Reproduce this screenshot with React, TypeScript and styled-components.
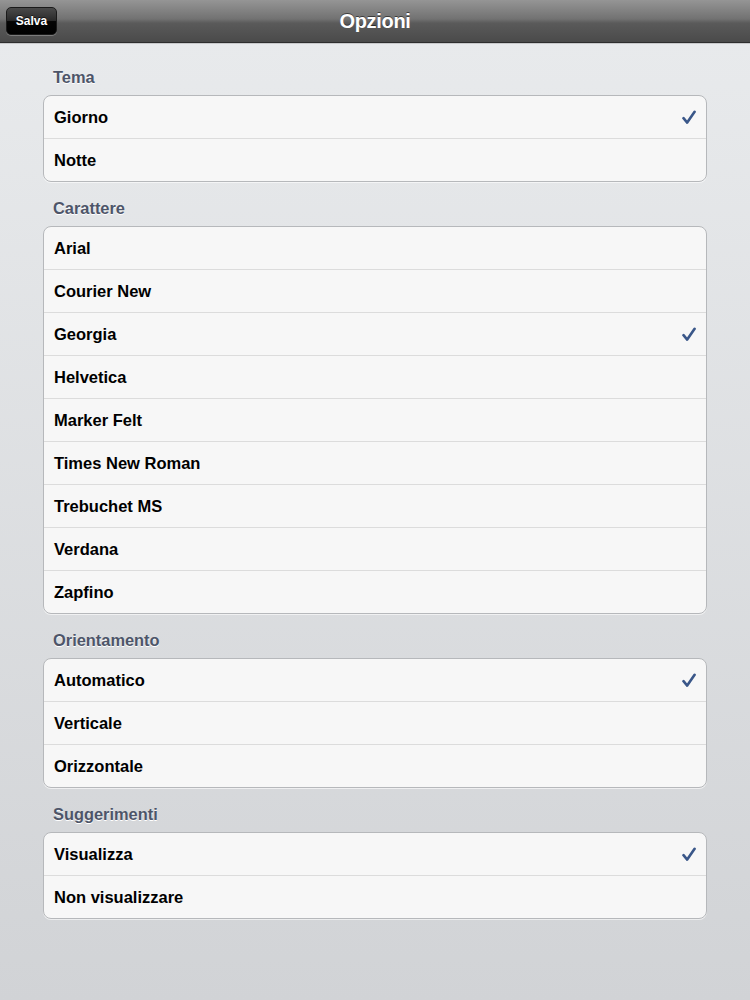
import React from "react";
import styled, { createGlobalStyle } from "styled-components";

const Global = createGlobalStyle`
  html, body { margin: 0; padding: 0; }
  body {
    font-family: "Liberation Sans", Helvetica, Arial, sans-serif;
    background: linear-gradient(180deg, #e8eaec 0%, #d2d4d7 100%);
    min-height: 1000px;
  }
`;

const Page = styled.div`
  width: 750px;
  min-height: 1000px;
  display: flex;
  flex-direction: column;
  background: linear-gradient(180deg, #e9ebed 0%, #d1d3d6 100%);
`;

const NavBar = styled.div`
  position: relative;
  height: 42px;
  display: flex;
  align-items: center;
  justify-content: center;
  background: linear-gradient(180deg, #959595 0%, #727272 45%, #5a5a5a 55%, #4a4a4a 100%);
  border-bottom: 1px solid #2e2e2e;
  box-shadow: 0 1px 0 #c8c9cb;
`;

const NavButton = styled.button`
  position: absolute;
  left: 6px;
  top: 7px;
  width: 51px;
  height: 28px;
  border-radius: 5px;
  border: 1px solid #1a1a1a;
  background: linear-gradient(180deg, #4a4a4a 0%, #2a2a2a 48%, #050505 52%, #000 100%);
  color: #fff;
  font-family: "Liberation Sans", Arial, sans-serif;
  font-weight: bold;
  font-size: 12px;
  padding: 0;
  box-shadow: 0 1px 0 rgba(255,255,255,0.25);
  text-shadow: 0 -1px 0 rgba(0,0,0,0.6);
`;

const Title = styled.div`
  color: #fff;
  font-weight: bold;
  font-size: 20px;
  letter-spacing: -0.3px;
  padding-top: 1px;
  text-shadow: 0 -1px 0 rgba(0,0,0,0.5);
`;

const Content = styled.div`
  padding: 25px 43px 0 43px;
  display: flex;
  flex-direction: column;
`;

const Section = styled.div`
  display: flex;
  flex-direction: column;
  margin-bottom: 17px;
`;

const Label = styled.div`
  font-weight: bold;
  font-size: 16.4px;
  color: #4d5569;
  padding-left: 10px;
  height: 18px;
  line-height: 18px;
  margin-bottom: 9px;
  text-shadow: 0 1px 0 #fff;
`;

const Group = styled.div`
  background: #f7f7f7;
  border: 1px solid #b6b8bb;
  border-radius: 8px;
  overflow: hidden;
  box-shadow: 0 1px 0 rgba(255,255,255,0.6);
`;

const Row = styled.div`
  height: 42px;
  display: flex;
  align-items: center;
  justify-content: space-between;
  padding: 0 10px;
  font-weight: bold;
  font-size: 16.5px;
  color: #000;
  & + & { border-top: 1px solid #dcdcdc; }
`;

const Check = () => (
  <svg width="14" height="15" viewBox="0 0 14 15">
    <path d="M1.5 8.2 L5.2 12.6 L12.6 1.8" fill="none" stroke="#3a5789" strokeWidth="2.6" strokeLinecap="round" strokeLinejoin="round" />
  </svg>
);

const sections = [
  { title: "Tema", items: ["Giorno", "Notte"], sel: 0 },
  { title: "Carattere", items: ["Arial", "Courier New", "Georgia", "Helvetica", "Marker Felt", "Times New Roman", "Trebuchet MS", "Verdana", "Zapfino"], sel: 2 },
  { title: "Orientamento", items: ["Automatico", "Verticale", "Orizzontale"], sel: 0 },
  { title: "Suggerimenti", items: ["Visualizza", "Non visualizzare"], sel: 0 },
];

export default function App() {
  return (
    <Page>
      <Global />
      <NavBar>
        <NavButton>Salva</NavButton>
        <Title>Opzioni</Title>
      </NavBar>
      <Content>
        {sections.map((s) => (
          <Section key={s.title}>
            <Label>{s.title}</Label>
            <Group>
              {s.items.map((it, i) => (
                <Row key={it}>
                  <span>{it}</span>
                  {i === s.sel && <Check />}
                </Row>
              ))}
            </Group>
          </Section>
        ))}
      </Content>
    </Page>
  );
}
